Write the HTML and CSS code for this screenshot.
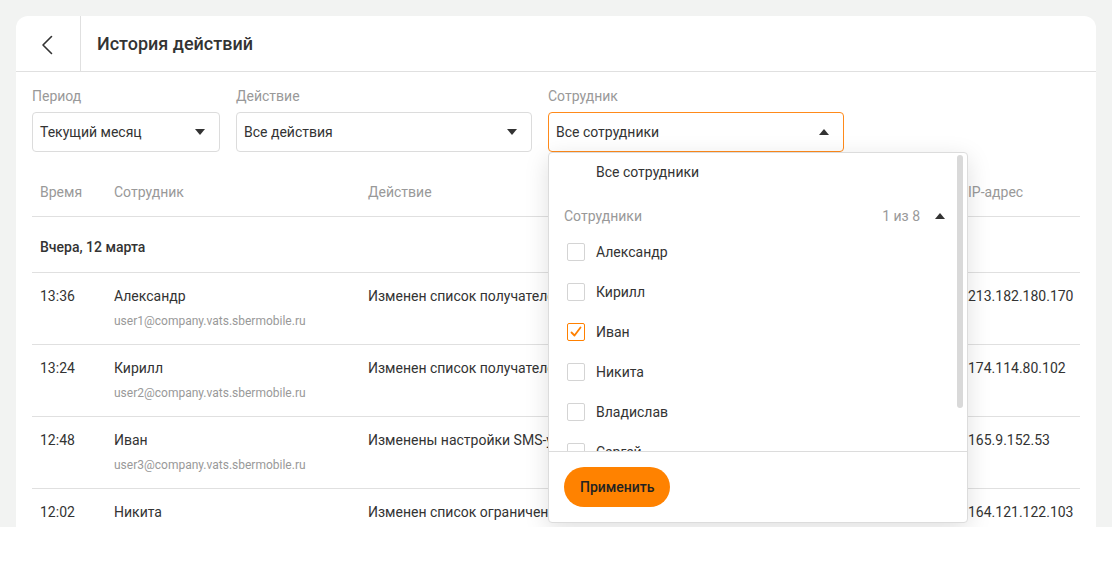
FILE: index.html
```html
<!DOCTYPE html>
<html lang="ru">
<head>
<meta charset="utf-8">
<title>История действий</title>
<link rel="stylesheet" href="styles.css">
</head>
<body>
<div class="page">
  <div class="card">
    <div class="header">
      <button class="back" aria-label="Назад">
        <svg width="64" height="55" viewBox="0 0 64 55"><polyline points="35.5,20.5 27,29 35.5,37.5" fill="none" stroke="#333" stroke-width="1.6" stroke-linecap="round" stroke-linejoin="round"/></svg>
      </button>
      <h1 class="title">История действий</h1>
    </div>

    <div class="filters">
      <div class="field field-period">
        <div class="label">Период</div>
        <div class="select"><span class="value">Текущий месяц</span><span class="caret"></span></div>
      </div>
      <div class="field field-action">
        <div class="label">Действие</div>
        <div class="select"><span class="value">Все действия</span><span class="caret"></span></div>
      </div>
      <div class="field field-emp">
        <div class="label">Сотрудник</div>
        <div class="select select-open"><span class="value">Все сотрудники</span><span class="caret caret-up"></span></div>
        <div class="dropdown">
          <div class="dd-list">
            <div class="dd-all">Все сотрудники</div>
            <div class="dd-section">
              <span class="dd-section-title">Сотрудники</span>
              <span class="dd-count">1 из 8</span>
              <span class="caret caret-up"></span>
            </div>
            <div class="dd-item"><span class="check"></span><span>Александр</span></div>
            <div class="dd-item"><span class="check"></span><span>Кирилл</span></div>
            <div class="dd-item"><span class="check check-on"><svg width="16" height="16" viewBox="0 0 16 16"><polyline points="3.5,8.5 6.5,11.5 12.5,3.5" fill="none" stroke="#ff8000" stroke-width="1.8" stroke-linecap="round" stroke-linejoin="round"/></svg></span><span>Иван</span></div>
            <div class="dd-item"><span class="check"></span><span>Никита</span></div>
            <div class="dd-item"><span class="check"></span><span>Владислав</span></div>
            <div class="dd-item"><span class="check"></span><span>Сергей</span></div>
            <div class="dd-item"><span class="check"></span><span>Дмитрий</span></div>
            <div class="dd-item"><span class="check"></span><span>Павел</span></div>
            <div class="dd-thumb"></div>
          </div>
          <div class="dd-footer">
            <button class="btn-apply">Применить</button>
          </div>
        </div>
      </div>
    </div>

    <div class="table">
      <div class="row row-head">
        <div class="cell">Время</div>
        <div class="cell">Сотрудник</div>
        <div class="cell">Действие</div>
        <div class="cell">IP-адрес</div>
      </div>
      <div class="group">Вчера, 12 марта</div>
      <div class="row">
        <div class="cell">13:36</div>
        <div class="cell"><div class="name">Александр</div><div class="email">user1@company.vats.sbermobile.ru</div></div>
        <div class="cell">Изменен список получателей уведомлений</div>
        <div class="cell">213.182.180.170</div>
      </div>
      <div class="row">
        <div class="cell">13:24</div>
        <div class="cell"><div class="name">Кирилл</div><div class="email">user2@company.vats.sbermobile.ru</div></div>
        <div class="cell">Изменен список получателей отчетов</div>
        <div class="cell">174.114.80.102</div>
      </div>
      <div class="row">
        <div class="cell">12:48</div>
        <div class="cell"><div class="name">Иван</div><div class="email">user3@company.vats.sbermobile.ru</div></div>
        <div class="cell">Изменены настройки SMS-уведомлений</div>
        <div class="cell">165.9.152.53</div>
      </div>
      <div class="row">
        <div class="cell">12:02</div>
        <div class="cell"><div class="name">Никита</div><div class="email">user4@company.vats.sbermobile.ru</div></div>
        <div class="cell">Изменен список ограничений доступа</div>
        <div class="cell">164.121.122.103</div>
      </div>
    </div>
  </div>
</div>
</body>
</html>
```

FILE: styles.css
```css
* { box-sizing: border-box; }

html, body {
  margin: 0;
  background: #ffffff;
  font-family: Roboto, "Liberation Sans", Arial, sans-serif;
  font-size: 14px;
  color: #333333;
}

.page {
  height: 527px;
  background: #f2f3f2;
  padding: 16px 16px 0;
}

.card {
  height: 100%;
  background: #ffffff;
  border-radius: 12px 12px 0 0;
  display: flex;
  flex-direction: column;
}

/* Header */
.header {
  height: 56px;
  flex: none;
  display: flex;
  align-items: stretch;
  border-bottom: 1px solid #e0e0e0;
}

.back {
  width: 65px;
  padding: 0;
  margin: 0;
  border: 0;
  border-right: 1px solid #e0e0e0;
  background: transparent;
  display: flex;
  align-items: flex-start;
  justify-content: flex-start;
  cursor: pointer;
}

.back svg { display: block; }

.title {
  margin: 0;
  padding-left: 16px;
  font-size: 18px;
  font-weight: 500;
  line-height: 55px;
  color: #333333;
}

/* Filters */
.filters {
  flex: none;
  display: flex;
  gap: 16px;
  padding: 14px 16px 0;
}

.field { position: relative; }
.field-period { width: 188px; }
.field-action { width: 296px; }
.field-emp { width: 296px; }

.label {
  height: 20px;
  line-height: 20px;
  margin-bottom: 6px;
  color: #999999;
  font-size: 14px;
}

.select {
  height: 40px;
  border: 1px solid #dcdcdc;
  border-radius: 4px;
  display: flex;
  align-items: center;
  justify-content: space-between;
  padding: 0 14px 0 7px;
  color: #333333;
}

.select-open { border-color: #ff8a1a; }

.caret {
  width: 0;
  height: 0;
  border-left: 5px solid transparent;
  border-right: 5px solid transparent;
  border-top: 6px solid #333333;
}

.caret-up {
  border-top: 0;
  border-bottom: 6px solid #333333;
}

/* Dropdown */
.dropdown {
  position: absolute;
  top: 100%;
  left: 0;
  width: 420px;
  height: 371px;
  background: #ffffff;
  border: 1px solid #dcdcdc;
  border-radius: 4px;
  box-shadow: 0 6px 24px rgba(0, 0, 0, 0.13);
  display: flex;
  flex-direction: column;
  z-index: 5;
}

.dd-list {
  position: relative;
  height: 298px;
  overflow: hidden;
  flex: none;
}

.dd-all {
  height: 39px;
  line-height: 39px;
  padding-left: 47px;
  color: #333333;
}

.dd-section {
  height: 40px;
  display: flex;
  align-items: center;
  padding: 8px 22px 0 15px;
  color: #999999;
}

.dd-section-title { flex: 1; }
.dd-count { margin-right: 15px; }

.dd-item {
  height: 40px;
  display: flex;
  align-items: center;
  padding-left: 18px;
  gap: 11px;
  color: #333333;
}

.check {
  width: 18px;
  height: 18px;
  border: 1px solid #d4d4d4;
  border-radius: 2px;
  flex: none;
  display: flex;
  align-items: center;
  justify-content: center;
}

.check-on { border-color: #ff8000; }
.check svg { display: block; }

.dd-thumb {
  position: absolute;
  top: 2px;
  right: 4px;
  width: 6px;
  height: 253px;
  border-radius: 3px;
  background: #d9d9d9;
}

.dd-footer {
  flex: 1;
  border-top: 1px solid #dcdcdc;
  padding: 15px 15px 0;
}

.btn-apply {
  height: 40px;
  padding: 0 16px;
  border: 0;
  border-radius: 20px;
  background: #ff8200;
  color: #222222;
  font-family: Roboto, "Liberation Sans", Arial, sans-serif;
  font-size: 14px;
  font-weight: 500;
  cursor: pointer;
}

/* Table */
.table {
  flex: 1;
  overflow: hidden;
  margin: 16px 16px 0;
}

.row {
  display: grid;
  grid-template-columns: 74px 254px 600px 120px;
  border-bottom: 1px solid #e0e0e0;
  padding: 13px 0 15px;
}

.cell {
  padding-left: 8px;
  line-height: 20px;
  white-space: nowrap;
  overflow: hidden;
}

.row-head {
  height: 49px;
  padding: 14px 0 0;
  color: #999999;
}

.group {
  height: 56px;
  border-bottom: 1px solid #e0e0e0;
  padding: 20px 8px 0;
  line-height: 20px;
  font-weight: 500;
  color: #333333;
}

.name { line-height: 20px; }

.email {
  margin-top: 7px;
  font-size: 12px;
  line-height: 16px;
  color: #999999;
}
```
